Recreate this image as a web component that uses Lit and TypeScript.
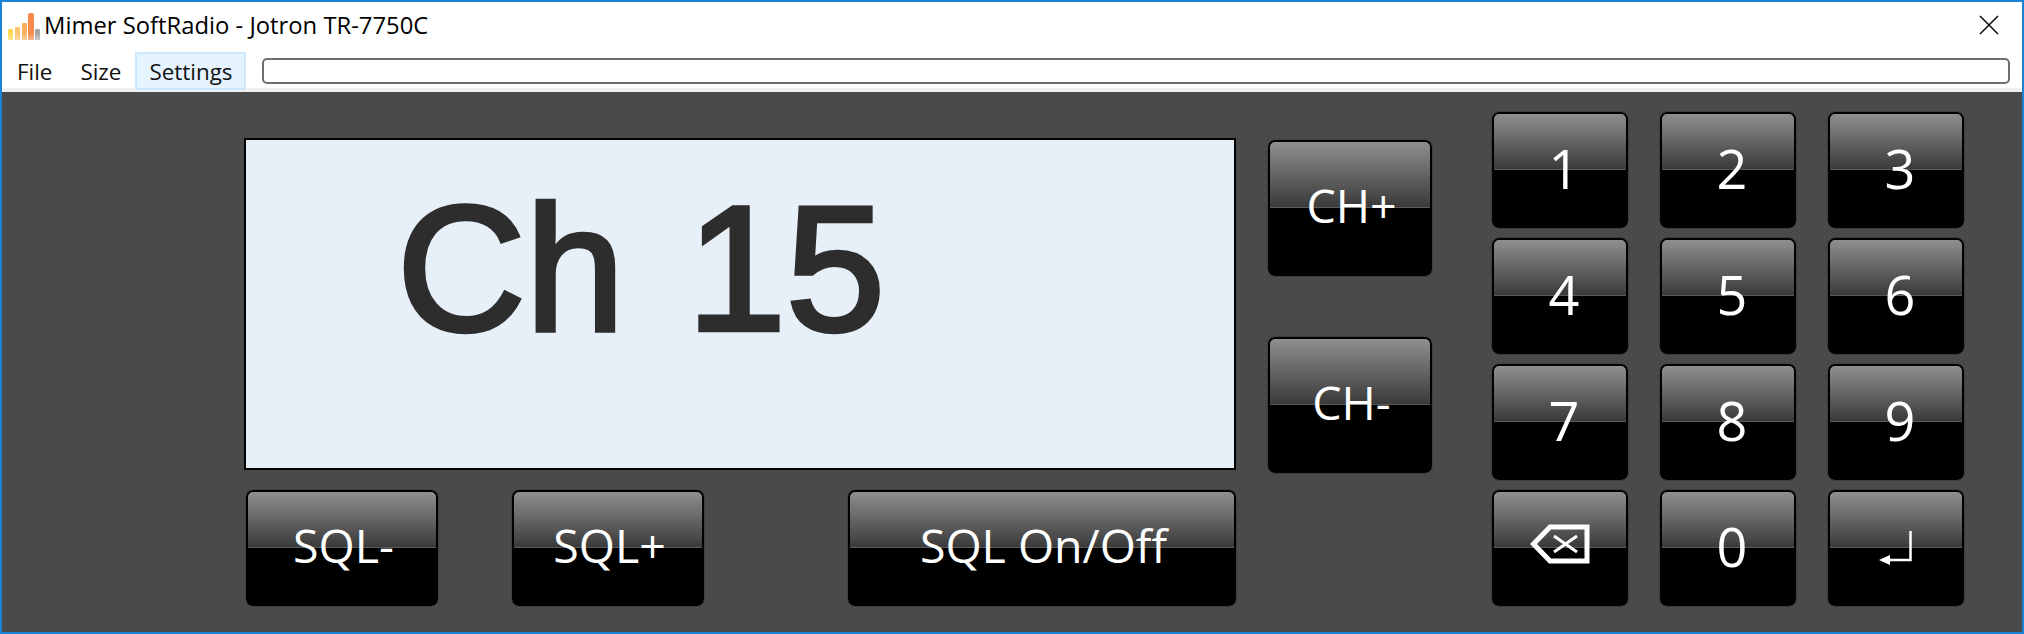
import { LitElement, html, css, svg } from "lit";
import { customElement } from "lit/decorators.js";

@customElement("app-root")
export class AppRoot extends LitElement {
  static styles = css`
    :host {
      display: block;
      width: 2024px;
      height: 634px;
      font-family: "Open Sans", "Noto Sans", sans-serif;
    }
    .window {
      box-sizing: border-box;
      width: 2024px;
      height: 634px;
      border: 2px solid #1883d7;
      display: flex;
      flex-direction: column;
      background: #fff;
    }
    .title {
      height: 42px;
      display: flex;
      align-items: center;
      padding-left: 4px;
      flex: none;
    }
    .logo { width: 34px; height: 34px; flex: none; }
    .title-text {
      font-size: 23.8px;
      color: #000;
      margin-left: 4px;
      padding-top: 4px;
      white-space: nowrap;
      flex: 1;
    }
    .close { width: 20px; height: 20px; margin: 4px 23px 0 0; flex: none; }
    .menubar {
      height: 44px;
      flex: none;
      display: flex;
      align-items: flex-start;
      border-bottom: 4px solid #f0f0f0;
      padding-left: 1px;
    }
    .menu {
      box-sizing: border-box;
      height: 38px;
      margin-top: 8px;
      display: flex;
      align-items: center;
      font-size: 22.4px;
      color: #111;
      padding: 0 12px;
      border: 2px solid transparent;
    }
    .menu.active { background: #e5f3ff; border-color: #cce8ff; }
    .progress {
      flex: 1;
      box-sizing: border-box;
      height: 26px;
      margin: 14px 12px 0 16px;
      border: 2px solid #6e6e6e;
      border-radius: 5px;
    }
    .panel {
      flex: 1;
      background: #4a4a4a;
      display: flex;
      padding: 20px 0 0 242px;
      align-items: flex-start;
    }
    .left { width: 992px; margin-top: 26px; display: flex; flex-direction: column; gap: 20px; flex: none; }
    .display {
      box-sizing: border-box;
      height: 332px;
      background: #e7eff8;
      border: 2px solid #000;
      padding: 40px 0 0 151px;
    }
    .lcd {
      font-family: "Liberation Sans", Arial, sans-serif;
      font-size: 178px;
      line-height: 178px;
      word-spacing: 13px;
      color: #2d2d2d;
      -webkit-text-stroke: 4.5px #2d2d2d;
      filter: blur(0.7px);
    }
    .sql { display: flex; padding-left: 2px; }
    .sql .b1 { width: 192px; }
    .sql .b2 { width: 192px; margin-left: 74px; }
    .sql .b3 { width: 388px; margin-left: 144px; }
    .sql button { height: 116px; }
    .ch {
      width: 164px;
      margin: 28px 0 0 32px;
      display: flex;
      flex-direction: column;
      gap: 61px;
      flex: none;
    }
    .ch button { height: 136px; }
    .pad {
      margin-left: 60px;
      display: grid;
      grid-template-columns: repeat(3, 136px);
      grid-auto-rows: 116px;
      column-gap: 32px;
      row-gap: 10px;
      flex: none;
    }
    button {
      box-sizing: border-box;
      width: 100%;
      margin: 0;
      padding: 0 0 5px 3px;
      border: 2px solid #000;
      border-radius: 7px;
      outline: 1px solid #3e3e3e;
      outline-offset: 0;
      color: #fff;
      font-family: "Open Sans", "Noto Sans", sans-serif;
      font-size: 46.5px;
      line-height: 1;
      display: flex;
      align-items: center;
      justify-content: center;
      background: linear-gradient(to bottom, #8f8f8f 0%, #3a3a3a 49%, #5a5a5a 49%, #5a5a5a 50%, #000 50%, #000 100%);
    }
    button.digit { font-size: 54px; padding-left: 8px; }
    button.icon { padding: 0; }
    button.icon.up { padding-bottom: 9px; }
    button svg { display: block; }
  `;

  private key(label: unknown, cls = "") {
    return html`<button class=${cls}>${label}</button>`;
  }

  render() {
    const back = svg`<svg width="60" height="40" viewBox="0 0 60 40" fill="none" stroke="#fff">
      <path d="M20 3H57V37H20L3.5 20Z" stroke-width="5"/>
      <path d="M24 12L47 28M47 12L24 28" stroke-width="3"/></svg>`;
    const enter = svg`<svg width="34" height="34" viewBox="0 0 34 34" fill="none">
      <path d="M31.5 0V29H8" stroke="#fff" stroke-width="2.5"/>
      <path d="M0 29L11 24V34Z" fill="#fff"/></svg>`;
    return html`
      <div class="window">
        <div class="title">
          <svg class="logo" viewBox="0 0 34 34">
            <defs>
              <linearGradient id="fade" x1="0" y1="0" x2="0" y2="1">
                <stop offset="0.7" stop-color="#fff" stop-opacity="0"/>
                <stop offset="1" stop-color="#fff" stop-opacity="0.45"/>
              </linearGradient>
            </defs>
            <g>
              <rect x="2" y="23" width="5" height="12" rx="1" fill="#ffd84d"/>
              <rect x="9" y="21" width="5" height="14" rx="1" fill="#fdc36a"/>
              <rect x="16" y="17" width="5" height="18" rx="1" fill="#fbae5e"/>
              <rect x="22" y="7" width="6" height="28" rx="2" fill="#f8894a"/>
              <rect x="29" y="23" width="5" height="12" rx="1" fill="#a4a4a4"/>
              <rect x="0" y="7" width="34" height="28" fill="url(#fade)"/>
            </g>
          </svg>
          <span class="title-text">Mimer SoftRadio - Jotron TR-7750C</span>
          <svg class="close" viewBox="0 0 20 20"><path d="M1 1L19 19M19 1L1 19" stroke="#111" stroke-width="1.6" fill="none"/></svg>
        </div>
        <div class="menubar">
          <div class="menu">File</div>
          <div class="menu">Size</div>
          <div class="menu active">Settings</div>
          <div class="progress"></div>
        </div>
        <div class="panel">
          <div class="left">
            <div class="display"><div class="lcd">Ch 15</div></div>
            <div class="sql">
              <div class="b1">${this.key("SQL-")}</div>
              <div class="b2">${this.key("SQL+")}</div>
              <div class="b3">${this.key("SQL On/Off")}</div>
            </div>
          </div>
          <div class="ch">
            ${this.key("CH+")}
            ${this.key("CH-")}
          </div>
          <div class="pad">
            ${["1","2","3","4","5","6","7","8","9"].map((k) => this.key(k, "digit"))}
            ${this.key(back, "icon up")}
            ${this.key("0", "digit")}
            ${this.key(enter, "icon")}
          </div>
        </div>
      </div>
    `;
  }
}
